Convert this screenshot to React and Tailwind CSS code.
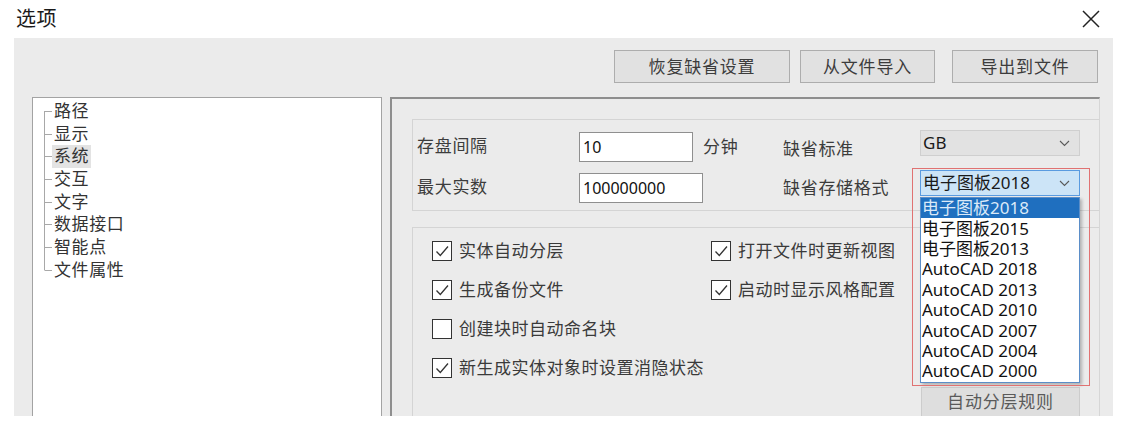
import React from "react";

const Chevron = () => (
  <svg width="11" height="7" viewBox="0 0 11 7" fill="none">
    <path d="M1 1l4.5 4.5L10 1" stroke="#5a5a5a" strokeWidth="1.1" />
  </svg>
);

const Check = ({ checked, label }) => (
  <div className="flex items-center h-[20px]">
    <div className="w-[20px] h-[20px] border border-[#333333] bg-white flex items-center justify-center shrink-0">
      {checked && (
        <svg width="16" height="14" viewBox="0 0 16 14" fill="none">
          <path d="M2.5 7.5l3.8 4L14 2.5" stroke="#333333" strokeWidth="1.3" />
        </svg>
      )}
    </div>
    <span className="ml-[7px] text-[17px] leading-[20px] tracking-[0.5px] text-[#3a3a3a] whitespace-nowrap">
      {label}
    </span>
  </div>
);

const treeItems = ["路径", "显示", "系统", "交互", "文字", "数据接口", "智能点", "文件属性"];
const listItems = [
  "电子图板2018",
  "电子图板2015",
  "电子图板2013",
  "AutoCAD 2018",
  "AutoCAD 2013",
  "AutoCAD 2010",
  "AutoCAD 2007",
  "AutoCAD 2004",
  "AutoCAD 2000",
];

export default function App() {
  return (
    <div className="w-[1123px] h-[427px] bg-white overflow-hidden font-['Noto_Sans','Noto_Sans_CJK_SC',sans-serif] text-[#333333]">
      {/* header */}
      <div className="h-[38px] flex items-center justify-between pl-[16px] pr-[23px]">
        <span className="text-[20px] leading-[24px] tracking-[0.5px] text-[#1a1a1a]">选项</span>
        <svg width="18" height="18" viewBox="0 0 18 18" fill="none">
          <path d="M1 1l16 16M17 1L1 17" stroke="#222222" strokeWidth="1.5" />
        </svg>
      </div>

      {/* gray body */}
      <div className="ml-[14px] w-[1099px] h-[378px] bg-[#ebebeb] overflow-hidden flex flex-col">
        <div className="mt-[12px] h-[33px] flex justify-end pr-[15px] shrink-0">
          <button className="w-[176px] h-[33px] bg-[#e1e1e1] border border-[#adadad] text-[17px] tracking-[0.8px] text-[#3c3c3c]">
            恢复缺省设置
          </button>
          <button className="ml-[10px] w-[135px] h-[33px] bg-[#e1e1e1] border border-[#adadad] text-[17px] tracking-[0.8px] text-[#3c3c3c]">
            从文件导入
          </button>
          <button className="ml-[17px] w-[146px] h-[33px] bg-[#e1e1e1] border border-[#adadad] text-[17px] tracking-[0.8px] text-[#3c3c3c]">
            导出到文件
          </button>
        </div>

        <div className="mt-[14px] flex-1 flex pl-[18px]">
          {/* tree */}
          <div className="w-[350px] h-[330px] bg-white border-l border-t border-r border-[#a3a3a3] pt-[2px] shrink-0">
            {treeItems.map((t, i) => (
              <div key={t} className="h-[22.7px] flex">
                <div className="ml-[11px] w-[8px] flex flex-col">
                  <div className={"flex-1 " + (i === 0 ? "" : "border-l border-[#a8a8a8]")} />
                  <div
                    className={
                      "flex-1 border-t border-[#a8a8a8] " +
                      (i === treeItems.length - 1 ? "border-l" : "border-l")
                    }
                    style={i === treeItems.length - 1 ? { borderLeftColor: "transparent" } : undefined}
                  />
                </div>
                <span
                  className={
                    "px-[2px] text-[17px] leading-[22.7px] tracking-[0.6px] text-[#333333] " +
                    (t === "系统" ? "bg-[#e3e3e3]" : "")
                  }
                >
                  {t}
                </span>
              </div>
            ))}
          </div>

          {/* right panel */}
          <div className="ml-[8px] w-[710px] h-[330px] border-t-2 border-l-2 border-[#8e8e8e] border-r border-r-[#d6d6d6] bg-[#ebebeb] pl-[20px] pt-[20px] flex flex-col shrink-0">
            {/* group 1 */}
            <div className="h-[92px] border border-r-0 border-[#d4d4d4] pt-[10px] pl-[4px] shrink-0">
              <div className="flex h-[32px]">
                <div className="w-[162px] flex items-center text-[17px] tracking-[0.7px] text-[#3c3c3c]">存盘间隔</div>
                <div className="w-[204px] flex items-center pt-[2px]">
                  <div className="w-[114px] h-[30px] bg-white border border-[#8f8f8f] flex items-center pl-[3px] text-[16px] text-[#111111]">
                    10
                  </div>
                  <span className="ml-[10px] text-[17px] tracking-[0.7px] text-[#3c3c3c]">分钟</span>
                </div>
                <div className="w-[137px] flex items-center pt-[6px] text-[17px] tracking-[0.7px] text-[#3c3c3c]">缺省标准</div>
                <div className="w-[160px] h-[26px] self-start bg-[#e2e2e2] border border-[#cfcfcf] flex items-center justify-between pl-[2px] pr-[9px] text-[17px] text-[#1a1a1a]">
                  <span>GB</span>
                  <Chevron />
                </div>
              </div>

              <div className="mt-[8px] flex h-[33px]">
                <div className="w-[162px] flex items-center text-[17px] tracking-[0.7px] text-[#3c3c3c]">最大实数</div>
                <div className="w-[204px] flex items-center pt-[3px]">
                  <div className="w-[124px] h-[30px] bg-white border border-[#8f8f8f] flex items-center pl-[3px] text-[16px] text-[#111111]">
                    100000000
                  </div>
                </div>
                <div className="w-[137px] flex items-center pt-[2px] text-[17px] tracking-[0.7px] text-[#3c3c3c]">缺省存储格式</div>
                <div className="relative z-10 w-[160px] h-[26px] self-start">
                  <div className="w-full h-full bg-[#cce4f7] border border-[#5a9be0] flex items-center justify-between pl-[2px] pr-[9px] text-[17px] text-[#1a1a1a] whitespace-nowrap">
                    <span>电子图板2018</span>
                    <Chevron />
                  </div>
                  <div className="absolute left-0 top-[27px] w-[160px] bg-white border border-[#5b8ec8] shadow-[2px_2px_3px_rgba(0,0,0,0.25)]">
                    {listItems.map((it, i) => (
                      <div
                        key={it}
                        className={
                          "h-[20.4px] pl-[1px] flex items-center text-[17px] leading-[20px] whitespace-nowrap " +
                          (i === 0 ? "bg-[#1f6fbf] text-[#dbe9f8]" : "text-[#111111]")
                        }
                      >
                        {it}
                      </div>
                    ))}
                  </div>
                  <div className="absolute left-[-8px] top-[-2px] w-[178px] h-[218px] border border-[#e07272] pointer-events-none" />
                </div>
              </div>
            </div>

            {/* group 2 */}
            <div className="mt-[16px] flex-1 border border-r-0 border-b-0 border-[#d4d4d4] flex items-start">
              <div className="mt-[13px] ml-[19px] grid grid-cols-[279px_auto] gap-y-[19px]">
                <Check checked label="实体自动分层" />
                <Check checked label="打开文件时更新视图" />
                <Check checked label="生成备份文件" />
                <Check checked label="启动时显示风格配置" />
                <Check checked={false} label="创建块时自动命名块" />
                <div />
                <Check checked label="新生成实体对象时设置消隐状态" />
                <div />
              </div>
              <div className="ml-auto mr-[19px] mt-[159px]">
                <button className="w-[159px] h-[30px] bg-[#dedede] border border-[#cccccc] text-[17px] tracking-[0.8px] text-[#5a5a5a]">
                  自动分层规则
                </button>
              </div>
            </div>
          </div>
        </div>
      </div>
    </div>
  );
}
